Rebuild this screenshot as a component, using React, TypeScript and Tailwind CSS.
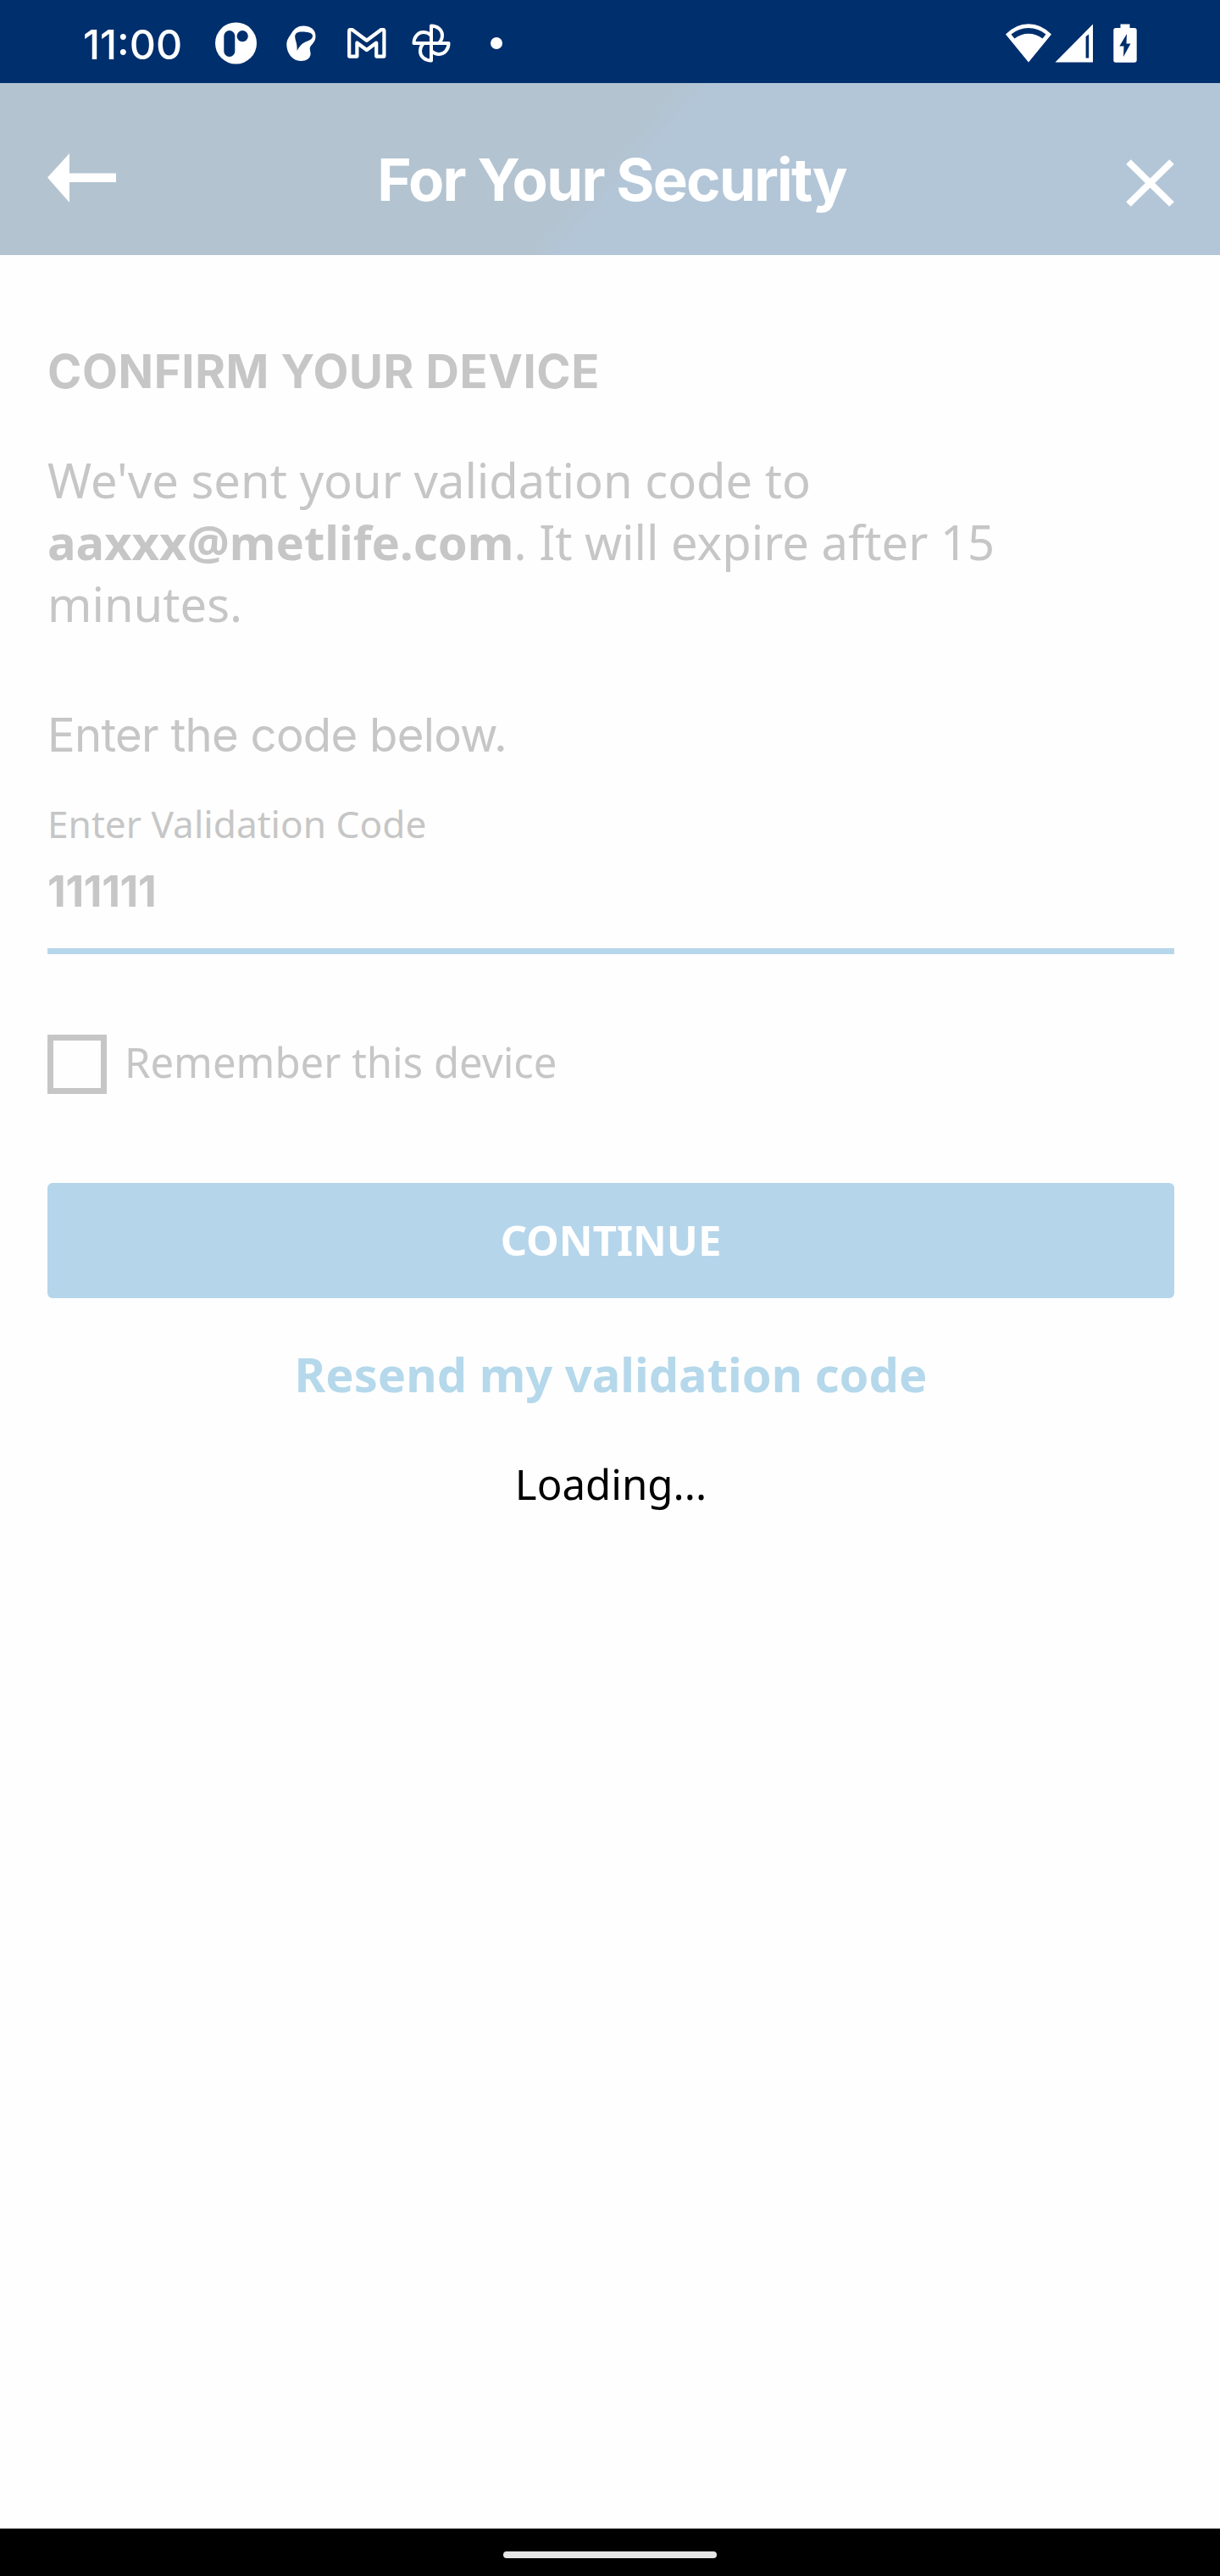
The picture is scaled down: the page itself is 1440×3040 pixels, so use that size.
function StatusBar() {
  return (
    <div className="flex h-[98px] shrink-0 items-center justify-between bg-[#002f6d] pt-1 pr-[98px] pl-[98px] text-white">
      <div className="flex items-center">
        <span className="w-[156px] pt-[3px] font-['Inter',sans-serif] text-[48.300px] leading-[60px] font-medium">
          11:00
        </span>
        <svg className="h-[50px] w-[50px]" viewBox="0 0 50 50" fill="none">
          <circle cx="24.5" cy="25" r="24.5" fill="currentColor" />
          <rect x="10.3" y="10" width="13" height="31" rx="6.5" fill="#002f6d" />
          <circle cx="32.2" cy="16.7" r="6.6" fill="#002f6d" />
        </svg>
        <svg className="ml-[34px] h-[42px] w-[35px]" viewBox="0 0 35 42" fill="none">
          <path
            fill="currentColor"
            fillRule="evenodd"
            d="M20 .4C28 .4 34.5 4.500 34.500 12.500C34.500 18 32 20.500 29 24C26.500 27 28.600 30 28.600 33.500C28.600 38.500 23.500 42 17 42C7.500 42 .3 33 .3 22.500C.3 16.500 3.500 13.500 6.500 8.500C9.500 3.500 14 .4 20 .4ZM18 7.500C12.500 7.500 9.500 10 10.300 14.500C11 19 13 22 12.600 29.800C15 26 17.500 21.800 22 19.800C26 18 31 16.800 31 12.300C31 8.500 24.500 7.500 18 7.500Z"
          />
        </svg>
        <svg className="ml-[37px] h-[36px] w-[46px]" viewBox="0 0 46 36" fill="none">
          <path
            d="M2.200 3.500C2.200 1.500 4.500 1.200 6 2.300L22.800 14.800L39.600 2.300C41.100 1.200 43.400 1.500 43.400 3.500V33.600H34.200V17.500L22.800 26L11.400 17.500V33.600H2.200Z"
            stroke="currentColor"
            strokeWidth="4.200"
            strokeLinejoin="round"
          />
        </svg>
        <svg className="ml-[30px] h-[46px] w-[46px]" viewBox="0 0 46 46" fill="none">
          <g stroke="currentColor" strokeWidth="4" strokeLinejoin="round">
            <path d="M23 23V2.500C30.500 2.500 36 7.500 36 13.500C36 17.500 34.500 20.500 32 23" />
            <path d="M23 23H43.500C43.500 30.500 38.500 36 32.500 36C28.500 36 25.500 34.500 23 32" />
            <path d="M23 23V43.500C15.500 43.500 10 38.500 10 32.500C10 28.500 11.500 25.500 14 23" />
            <path d="M23 23H2.500C2.500 15.500 7.500 10 13.500 10C17.500 10 20.500 11.500 23 14" />
          </g>
        </svg>
        <span className="ml-[47px] size-[14px] rounded-full bg-white" />
      </div>
      <div className="flex items-center">
        <svg className="h-[46px] w-[54px]" viewBox="0 0 54 46" fill="none">
          <path
            fill="currentColor"
            fillRule="evenodd"
            d="M0 12.500Q12 .3 27 .3T54 12.500L27 45.500ZM6.500 12.500L10.500 17.500Q18 11.800 27 11.800T43.500 17.500L47.500 12.500Q38.500 5 27 5T6.500 12.500Z"
          />
        </svg>
        <svg className="ml-[3px] h-[46px] w-[46px]" viewBox="0 0 46 46" fill="none">
          <path fill="currentColor" fillRule="evenodd" d="M1.500 45.500L46 .5V45.500ZM37.600 15V40.500H41.200V12.500Z" />
        </svg>
        <svg className="ml-[24px] h-[46px] w-[28px]" viewBox="0 0 28 46" fill="none">
          <path
            fill="currentColor"
            fillRule="evenodd"
            d="M8.500 .5H19.500V5H25C26.700 5 27.700 6 27.700 7.700V43C27.700 44.700 26.700 45.700 25 45.700H3C1.300 45.700 .3 44.700 .3 43V7.700C.3 6 1.300 5 3 5H8.500ZM16 12L7.300 26.500H12.500L12 39L20.500 23.500H15.500Z"
          />
        </svg>
      </div>
    </div>
  );
}

function Header() {
  return (
    <header className="flex h-[203px] shrink-0 items-center bg-[linear-gradient(132deg,#b3c3d0_49.5%,#b3c6d8_52%)] pt-6 pr-[54px] pl-14 text-white">
      <svg className="-mt-1 h-[58px] w-[82px]" viewBox="0 0 82 58" fill="currentColor">
        <path d="M0 28.500L26 0V23.500H81V34H26V58Z" />
      </svg>
      <h1 className="flex-1 pr-[23px] text-center font-['Inter',sans-serif] text-[69px] leading-[84px] font-bold tracking-[-1.750px] whitespace-nowrap">
        For Your Security
      </h1>
      <svg className="mt-2 h-[56px] w-[57px]" viewBox="0 0 57 56" fill="none">
        <path d="M3 3L54 53M54 3L3 53" stroke="currentColor" strokeWidth="8" />
      </svg>
    </header>
  );
}

export default function App() {
  return (
    <div className="flex h-[3040px] w-[1440px] flex-col bg-[#fefefe] font-['Noto_Sans',sans-serif]">
      <StatusBar />
      <Header />
      <main className="flex flex-1 flex-col px-14 pr-[54px] pt-[105px] text-[#c6c6c6]">
        <h2 className="font-['Inter',sans-serif] text-[54.500px] leading-[64px] font-bold tracking-[0.600px] whitespace-nowrap">
          CONFIRM YOUR DEVICE
        </h2>
        <p className="mt-[60px] text-[56.100px] leading-[73px]">
          We've sent your validation code to
          <br />
          <b className="font-bold">aaxxx@metlife.com</b>. It will expire after 15
          <br />
          minutes.
        </p>
        <p className="mt-[82px] font-['Inter',sans-serif] text-[54.500px] leading-[72px] tracking-[-0.750px]">
          Enter the code below.
        </p>
        <label className="mt-[39px] text-[44.200px] leading-[60px]">Enter Validation Code</label>
        <div className="mt-5 border-b-[7px] border-[#b6d6eb] pb-[37px] font-['Inter',sans-serif] text-[50.300px] leading-[60px] font-bold tracking-[-0.300px]">
          111111
        </div>
        <div className="mt-[95px] flex h-[70px] items-center">
          <span className="size-[70px] border-[7px] border-[#c6c6c6]" />
          <span className="ml-[21px] pb-[7px] text-[49px] leading-[70px]">Remember this device</span>
        </div>
        <button className="mt-[105px] flex h-[136px] items-center justify-center rounded-md bg-[#b5d5eb] pb-0.5 text-[49px] leading-[70px] font-bold text-white">
          CONTINUE
        </button>
        <a className="mt-[51px] text-center text-[56px] leading-[76px] font-bold text-[#b5d8eb]">
          Resend my validation code
        </a>
        <p className="mt-[59px] text-center text-[49.200px] leading-[66px] text-black">Loading...</p>
      </main>
      <div className="flex h-14 shrink-0 items-center justify-center bg-black pt-[5px]">
        <span className="h-2 w-[252px] rounded-full bg-[#e6e6e6]" />
      </div>
    </div>
  );
}
